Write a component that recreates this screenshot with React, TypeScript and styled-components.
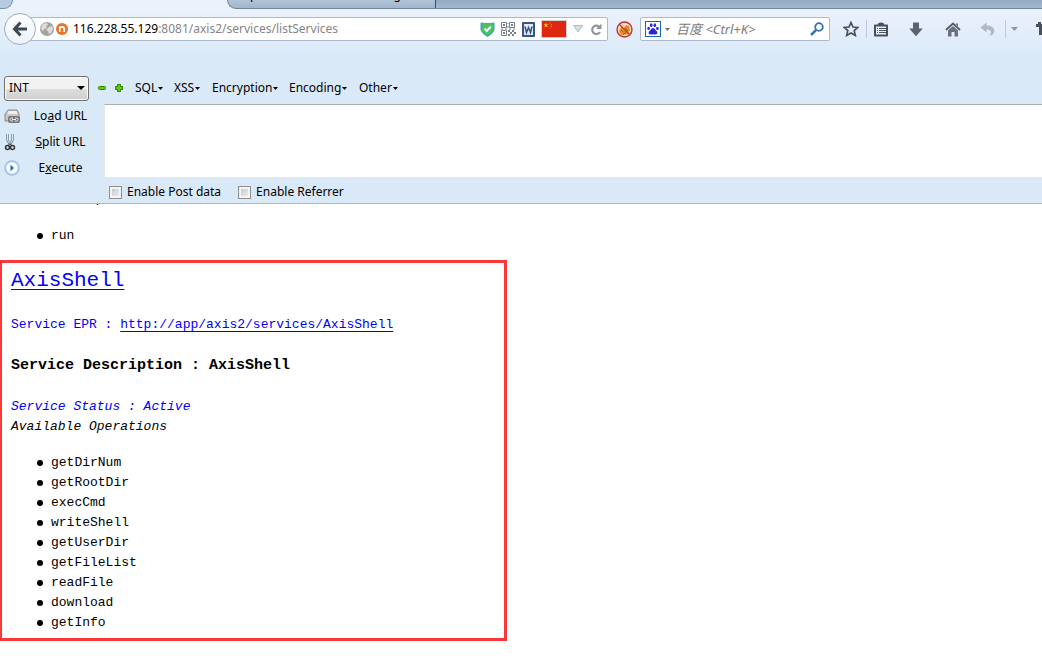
import React from "react";
import styled, { createGlobalStyle, css } from "styled-components";

const ui = `"Noto Sans", "Noto Sans CJK SC", sans-serif`;
const mono = `"Liberation Mono", "Noto Sans CJK SC", monospace`;

const Global = createGlobalStyle`
  * { box-sizing: border-box; }
  body { margin: 0; background: #fff; color: #000; }
  button, input, select, textarea { font: inherit; color: inherit; margin: 0; }
`;

const Chrome = styled.header`
  background: linear-gradient(#ebf2fb 8px, #dae9f8 60px);
  border-bottom: 1px solid #a5bbd3;
  font: 12px/20px ${ui};
`;

const TabStrip = styled.div`
  display: flex;
  height: 9px;
  overflow: hidden;
`;

const Tab = styled.div<{ $kind: "edge" | "active" | "idle" | "rest" }>`
  height: 9px;
  ${(p) => p.$kind === "edge" && css`
    width: 13px;
    background: #b6cbe2;
    border-right: 1px solid #7790b0;
    border-bottom: 1px solid #7790b0;
    border-bottom-right-radius: 9px;
  `}
  ${(p) => p.$kind === "active" && css`width: 214px;`}
  ${(p) => p.$kind === "idle" && css`
    display: flex;
    align-items: flex-end;
    justify-content: space-between;
    width: 209px;
    padding: 0 34px 3px 6px;
    overflow: hidden;
    background: linear-gradient(#b0c3d8, #a3b5c9);
    border-left: 1px solid #6f86a2;
    border-right: 1px solid #3e4e60;
    border-bottom: 1px solid #6f86a2;
    border-bottom-left-radius: 9px;
  `}
  ${(p) => p.$kind === "rest" && css`
    flex: 1;
    background: linear-gradient(#93aac5, #a3b7cd);
    border-bottom: 1px solid #6f86a2;
  `}
`;

const NavBar = styled.nav`
  display: flex;
  align-items: center;
  height: 40px;
  padding-left: 4px;
`;

const BackButton = styled.button`
  display: grid;
  place-items: center;
  flex: none;
  width: 32px;
  height: 32px;
  padding: 0;
  margin-right: -10px;
  z-index: 1;
  border: 1px solid #9fadbf;
  border-radius: 50%;
  background: linear-gradient(#fdfeff, #edf3fa);
`;

const Field = styled.div<{ $search?: boolean }>`
  display: flex;
  align-items: center;
  height: 24px;
  background: #fff;
  border: 1px solid #aab9cb;
  border-radius: 2px;
  ${(p) => p.$search
    ? css`flex: none; width: 190px; padding: 0 4px; gap: 4px;`
    : css`flex: 1; min-width: 0; padding: 0 5px 0 13px; gap: 2px;`}
`;

const Address = styled.a`
  flex: 1;
  min-width: 0;
  padding-left: 3px;
  overflow: hidden;
  white-space: nowrap;
  color: #858585;
  text-decoration: none;
`;

const Host = styled.span`color: #000;`;

const Badges = styled.div`
  display: flex;
  align-items: center;
  gap: 6px;
`;

const SearchInput = styled.input`
  flex: 1;
  min-width: 0;
  padding: 0 0 0 2px;
  border: 0;
  background: none;
  outline: 0;
  font-size: 13px;
  font-style: italic;
  &::placeholder { color: #7b7b7b; opacity: 1; }
`;

const IconButton = styled.button<{ $w?: number }>`
  display: grid;
  place-items: center;
  flex: none;
  width: ${(p) => p.$w ?? 16}px;
  height: 20px;
  padding: 0;
  border: 0;
  background: none;
`;

const Tools = styled.div`
  display: flex;
  align-items: center;
  flex: none;
  width: 212px;
  padding-left: 12px;
  overflow: hidden;
`;

const Divider = styled.span<{ $before?: number }>`
  flex: none;
  width: 1px;
  height: 18px;
  margin-left: ${(p) => p.$before ?? 0}px;
  background: #bccbdc;
`;

const HackBar = styled.section`
  padding-top: 26px;
  font: 13px/20px ${ui};
`;

const MenuRow = styled.div`
  display: flex;
  align-items: center;
  height: 26px;
  padding-left: 4px;
  font-size: 12px;
`;

const Menus = styled.div`
  display: flex;
  margin-left: 7px;
`;

const SelectWrap = styled.div`
  display: grid;
  align-items: center;
  width: 85px;
  margin-right: 5px;
  > * { grid-area: 1 / 1; }
  > svg { justify-self: end; margin-right: 4px; pointer-events: none; }
`;

const Select = styled.select`
  appearance: none;
  width: 100%;
  height: 25px;
  padding: 0 4px;
  border: 1px solid #707070;
  border-radius: 3px;
  box-shadow: inset 0 0 0 1px #fafafa;
  background: linear-gradient(#f2f2f2 50%, #dedede 50%, #d0d0d0);
`;

const MenuButton = styled.button<{ $w: number }>`
  display: flex;
  align-items: center;
  gap: 1px;
  width: ${(p) => p.$w}px;
  padding: 0;
  border: 0;
  background: none;
  white-space: nowrap;
`;

const Work = styled.div`
  display: grid;
  grid-template-columns: 104px 1fr;
  margin-top: 3px;
`;

const Actions = styled.div`
  display: flex;
  flex-direction: column;
`;

const Action = styled.button`
  display: grid;
  grid-template-columns: 16px 1fr;
  align-items: center;
  height: 26px;
  padding: 0 13px 2px 4px;
  border: 0;
  background: none;
  font-size: 12px;
  > span { padding-left: 10px; text-align: center; }
`;

const UrlBox = styled.textarea`
  display: block;
  width: 100%;
  height: 74px;
  resize: none;
  border: 1px solid #e3e9ef;
  border-top-color: #abadb3;
  border-right: 0;
  border-radius: 0;
  outline: 0;
  background: #fff;
`;

const Checks = styled.div`
  display: flex;
  gap: 17px;
  padding: 4px 0 1px 5px;
  font-size: 12px;
  line-height: 20px;
`;

const Check = styled.label`
  display: flex;
  align-items: center;
  gap: 5px;
`;

const Box = styled.input`
  appearance: none;
  width: 13px;
  height: 13px;
  border: 1px solid #8e8f8f;
  background: linear-gradient(135deg, #b9bec6, #f6f6f6);
  box-shadow: inset 0 0 0 2px #f4f4f4;
`;

const Page = styled.main`
  font: 13px/20px ${mono};
`;

const Cut = styled.div`
  display: flex;
  align-items: flex-end;
  height: 5px;
  padding-left: 11px;
  overflow: hidden;
`;

const List = styled.ul`
  margin: 0;
  padding: 0 0 0 37px;
  list-style: none;
`;

const Item = styled.li`
  display: flex;
  align-items: center;
  gap: 8px;
  &::before {
    content: "";
    width: 6px;
    height: 6px;
    border-radius: 50%;
    background: #000;
  }
`;

const Before = styled.div`
  padding: 17px 0 14px;
`;

const Highlight = styled.section`
  width: 507px;
  max-width: 100%;
  padding: 4px 8px 5px 9px;
  border: 3px solid #fb3838;
  border-left-width: 2px;
`;

const Title = styled.h2`
  margin: 0;
  font-size: 21px;
  line-height: 28px;
  font-weight: 400;
`;

const Link = styled.a`
  color: #00f;
  text-underline-offset: 3px;
  text-decoration-thickness: 1px;
`;

const Epr = styled.p`
  margin: 20px 0 0;
  color: #00f;
`;

const Description = styled.h4`
  margin: 21px 0;
  font-size: 15px;
`;

const Status = styled.div<{ $active?: boolean }>`
  font-style: italic;
  color: ${(p) => (p.$active ? "#00f" : "#000")};
`;

const Operations = styled(List)`
  margin-top: 16px;
  padding-left: 26px;
`;

const Caret = ({ w = 5, c = "#000" }: { w?: number; c?: string }) => (
  <svg width={w} height={Math.ceil(w / 2)} viewBox="0 0 10 5" preserveAspectRatio="none" aria-hidden>
    <path d="M0 0H10L5 5Z" fill={c} />
  </svg>
);

const HistoryMark = () => (
  <svg width="10" height="8" viewBox="0 0 10 8">
    <path d="M.5.5H9.500L5 7Z" fill="#d9dce0" stroke="#b4bac2" />
  </svg>
);

const BackArrow = () => (
  <svg width="16" height="16" viewBox="0 0 16 16" fill="none" stroke="#3f4954" strokeWidth="3">
    <path d="M8.500 1.500 2.500 8l6 6.500M3 8H15" />
  </svg>
);

const Globe = () => (
  <svg width="14" height="14" viewBox="0 0 14 14">
    <circle cx="7" cy="7" r="7" fill="#a3a3a3" />
    <path d="M2 3Q4 1 7 1L8 3 6 4 7 6 4 7 3 9 1 7ZM9 5 12 4 13 7 11 11 9 12 8 9 6 8Z" fill="#dedede" />
  </svg>
);

const Brand = () => (
  <svg width="12" height="12" viewBox="0 0 12 12">
    <circle cx="6" cy="6" r="6" fill="#e8742c" />
    <path d="M3.800 9V3.500M3.800 5Q4.500 3.800 6 3.800 8.200 3.800 8.200 6V9" fill="none" stroke="#fff" strokeWidth="1.700" />
  </svg>
);

const Shield = () => (
  <svg width="15" height="15" viewBox="0 0 14 15">
    <path d="M.5 1Q4 1.500 7 1.500 10 1.500 13.500 1V8Q12 12 7 14.500 2 12 .5 8Z" fill="#4cbf62" stroke="#2ba4cf" />
    <path d="M4 6.500 6.300 9 10.500 4.500" fill="none" stroke="#fff" strokeWidth="2" />
  </svg>
);

const Qr = () => (
  <svg width="15" height="15" viewBox="0 0 15 15" fill="none" stroke="#77818c">
    <path d="M.5.5h5v5h-5zM8.500.5h5v5h-5zM.5 8.500h5v5h-5z" />
    <path d="M2 3h2M10 3h2M2 11h2" strokeWidth="2" />
    <path d="M7 1v1M7 4v2M0 7h2M4 7h2M8 7h2M12 7h2" />
    <path d="M7 9h2M11 9h2M9 11h2M13 11h2M7 13h2M11 13h2" strokeWidth="2" />
  </svg>
);

const Word = () => (
  <svg width="13" height="15" viewBox="0 0 13 15">
    <rect width="13" height="15" rx="1" fill="#35548c" />
    <rect x="2" y="2" width="9" height="11" fill="#e3eaf4" />
    <path d="M3 4.500 4.500 10.500 6.500 5.500 8.500 10.500 10 4.500" fill="none" stroke="#35548c" strokeWidth="1.500" />
  </svg>
);

const Flag = () => (
  <svg width="26" height="18" viewBox="0 0 26 18">
    <rect x=".5" y=".5" width="25" height="17" fill="#de2910" stroke="#d2d0d0" />
    <path d="M5 2.500 5.600 4.400H7.500L6 5.500 6.500 7.400 5 6.200 3.500 7.400 4 5.500 2.500 4.400H4.400Z" fill="#ffde00" />
    <path d="M8.500 3h1M10 4.500h1M10 6.500h1M8.500 8h1" stroke="#f0a000" />
  </svg>
);

const Reload = () => (
  <svg width="12" height="13" viewBox="0 0 12 13">
    <path d="M9 3.500A4.200 4.200 0 1 0 10 9" fill="none" stroke="#8e959e" strokeWidth="2.200" />
    <path d="M11.500.5V6H6Z" fill="#8e959e" />
  </svg>
);

const Blocked = () => (
  <svg width="17" height="17" viewBox="0 0 17 17">
    <circle cx="8.500" cy="8.500" r="7" fill="#f1dcc8" />
    <path d="M3 10 5 6 8 7 10 4 13 5 14 9 12 13 5 14Z" fill="#e28a25" />
    <path d="M5 9 7 11M9 7 12 10M7 13 10 12" stroke="#9b5b15" />
    <circle cx="8.500" cy="8.500" r="7.500" fill="none" stroke="#c9302d" strokeWidth="1.400" />
    <path d="M3.400 3.400 13.600 13.600" stroke="#c9302d" strokeWidth="1.300" />
  </svg>
);

const Paw = () => (
  <svg width="16" height="16" viewBox="0 0 16 16" fill="#2a22dc">
    <rect x=".5" y=".5" width="15" height="15" fill="#fff" stroke="#1667b4" />
    <ellipse cx="3.600" cy="7.400" rx="1.300" ry="1.700" />
    <ellipse cx="6.200" cy="4.200" rx="1.300" ry="1.900" />
    <ellipse cx="9.800" cy="4.200" rx="1.300" ry="1.900" />
    <ellipse cx="12.400" cy="7.400" rx="1.300" ry="1.700" />
    <path d="M8 7Q9.500 7 10.500 9 13 10.500 12.300 12.500 11.500 14 8 13.300 4.500 14 3.700 12.500 3 10.500 5.500 9 6.500 7 8 7Z" />
  </svg>
);

const Magnifier = () => (
  <svg width="14" height="14" viewBox="0 0 14 14" fill="none" stroke="#3575b0">
    <circle cx="9" cy="5" r="3.800" strokeWidth="1.800" />
    <path d="M6.200 7.800 1 13" strokeWidth="2.500" />
  </svg>
);

const Star = () => (
  <svg width="16" height="16" viewBox="0 0 16 16">
    <path d="M8 1.500 10 6 14.800 6.400 11.200 9.600 12.300 14.400 8 11.900 3.700 14.400 4.800 9.600 1.200 6.400 6 6Z" fill="none" stroke="#47505b" strokeWidth="1.700" />
  </svg>
);

const Clipboard = () => (
  <svg width="14" height="15" viewBox="0 0 14 15">
    <path d="M1 3.500H13V13.500H1Z" fill="#e8eff8" stroke="#47505b" strokeWidth="2" strokeLinejoin="round" />
    <path d="M4 4V1.500Q7-.5 10 1.500V4Z" fill="#47505b" />
    <path d="M3 6.500h1M5 6.500h7M3 8.500h1M5 8.500h7M3 10.500h1M5 10.500h7" stroke="#47505b" />
  </svg>
);

const Download = () => (
  <svg width="14" height="15" viewBox="0 0 14 15">
    <path d="M4 .5H10V6.500H13.800L7 14.300.2 6.500H4Z" fill="#59626d" />
  </svg>
);

const Home = () => (
  <svg width="16" height="15" viewBox="0 0 16 15">
    <path d="M1 8 8 1.500 15 8" fill="none" stroke="#525b66" strokeWidth="1.800" />
    <path d="M3 8.500 8 4 13 8.500V14.500H9.500V10H6.500V14.500H3ZM11 1.500h2v3l-2-2Z" fill="#68717c" />
  </svg>
);

const Undo = () => (
  <svg width="15" height="14" viewBox="0 0 15 14">
    <path d="M.5 5.500 6.500.5V3.500Q14 3.500 14.300 9 14 13 9.500 13.800 12 10.500 10 8.500 9 7.500 6.500 7.500V10.500Z" fill="#b0bac5" />
  </svg>
);

const CropTool = () => (
  <svg width="14" height="14" viewBox="0 0 14 14">
    <path d="M0 2H2V0H5V2H12V11H14V13H3V5H0ZM6 5V10H9V5Z" fill="#47505b" />
  </svg>
);

const Minus = () => (
  <svg width="8" height="4" viewBox="0 0 8 4">
    <rect x=".5" y=".5" width="7" height="3" rx="1" fill="#58cf0a" stroke="#2f8500" />
  </svg>
);

const Plus = () => (
  <svg width="8" height="8" viewBox="0 0 8 8">
    <path d="M2.500.5h3v2h2v3h-2v2h-3v-2h-2v-3h2Z" fill="#58cf0a" stroke="#2f8500" />
  </svg>
);

const LoadIcon = () => (
  <svg width="16" height="15" viewBox="0 0 16 15">
    <path d="M4 1h9l2 4v7H1V5Z" fill="#c9c9c9" stroke="#898989" />
    <path d="M4.500 2h8l1 3h-10Z" fill="#eee" />
    <rect x="4" y="7" width="12" height="7" rx="2" fill="#777" />
    <path d="M9 9H7.500Q6 9 6 10.500T7.500 12H9M11 9h1.500Q14 9 14 10.500T12.500 12H11M8 10.500h4" fill="none" stroke="#eee" />
  </svg>
);

const Scissors = () => (
  <svg width="12" height="18" viewBox="0 0 12 18" fill="none">
    <path d="M3.500 1V7L6 11.500M8.500 1V7L6 11.500" stroke="#6d8995" strokeWidth="2.500" />
    <path d="M3.500 1V7L6 11M8.500 1V7L6 11" stroke="#d8e8ee" />
    <circle cx="3.500" cy="14.500" r="2" stroke="#333" strokeWidth="1.500" />
    <circle cx="8.500" cy="14.500" r="2" stroke="#333" strokeWidth="1.500" />
    <path d="M4 13 6 10.500 8 13" stroke="#333" />
  </svg>
);

const Play = () => (
  <svg width="16" height="16" viewBox="0 0 16 16">
    <circle cx="8" cy="8" r="7" fill="#dbe8f9" stroke="#a3bfe8" strokeWidth="1.500" />
    <circle cx="8" cy="8" r="5" fill="#fff" />
    <path d="M6.500 4.500 10 8 6.500 11.500Z" fill="#2d6bc0" />
  </svg>
);

const menus: [string, number][] = [
  ["SQL", 39],
  ["XSS", 38],
  ["Encryption", 77],
  ["Encoding", 70],
  ["Other", 50],
];

const operations = [
  "getDirNum", "getRootDir", "execCmd", "writeShell", "getUserDir",
  "getFileList", "readFile", "download", "getInfo",
];

export default function App() {
  return (
    <>
      <Global />
      <Chrome>
        <TabStrip>
          <Tab $kind="edge" />
          <Tab $kind="active" />
          <Tab $kind="idle"><span>http://</span><span>g</span></Tab>
          <Tab $kind="rest" />
        </TabStrip>
        <NavBar aria-label="Navigation">
          <BackButton aria-label="Back"><BackArrow /></BackButton>
          <Field>
            <Globe />
            <Brand />
            <Address href="#"><Host>116.228.55.129</Host>:8081/axis2/services/listServices</Address>
            <Badges>
              <Shield />
              <Qr />
              <Word />
              <Flag />
              <IconButton $w={10} aria-label="History"><HistoryMark /></IconButton>
              <IconButton $w={13} aria-label="Reload"><Reload /></IconButton>
            </Badges>
          </Field>
          <IconButton $w={32} aria-label="Blocker"><Blocked /></IconButton>
          <Field $search>
            <Paw />
            <Caret w={5} c="#707070" />
            <SearchInput aria-label="Search" placeholder="百度 <Ctrl+K>" />
            <IconButton aria-label="Go"><Magnifier /></IconButton>
          </Field>
          <Tools>
            <IconButton $w={18} aria-label="Bookmark"><Star /></IconButton>
            <Divider $before={6} />
            <IconButton $w={28} aria-label="Bookmarks list"><Clipboard /></IconButton>
            <IconButton $w={42} aria-label="Downloads"><Download /></IconButton>
            <IconButton $w={32} aria-label="Home"><Home /></IconButton>
            <IconButton $w={36} aria-label="Undo"><Undo /></IconButton>
            <Divider />
            <IconButton $w={17} aria-label="Undo list"><Caret w={7} c="#8e98a4" /></IconButton>
            <IconButton $w={40} aria-label="Crop"><CropTool /></IconButton>
          </Tools>
        </NavBar>
        <HackBar>
          <MenuRow>
            <SelectWrap>
              <Select aria-label="Type" defaultValue="INT"><option>INT</option></Select>
              <Caret w={8} />
            </SelectWrap>
            <IconButton aria-label="Less"><Minus /></IconButton>
            <IconButton $w={18} aria-label="More"><Plus /></IconButton>
            <Menus>
              {menus.map(([name, w]) => (
                <MenuButton key={name} $w={w}>{name}<Caret w={5} /></MenuButton>
              ))}
            </Menus>
          </MenuRow>
          <Work>
            <Actions>
              <Action><LoadIcon /><span>Lo<u>a</u>d URL</span></Action>
              <Action><Scissors /><span><u>S</u>plit URL</span></Action>
              <Action><Play /><span>E<u>x</u>ecute</span></Action>
            </Actions>
            <div>
              <UrlBox aria-label="URL" />
              <Checks>
                <Check><Box type="checkbox" />Enable Post data</Check>
                <Check><Box type="checkbox" />Enable Referrer</Check>
              </Checks>
            </div>
          </Work>
        </HackBar>
      </Chrome>
      <Page>
        <Cut><Status>Available Operations</Status></Cut>
        <Before>
          <List><Item>run</Item></List>
        </Before>
        <Highlight>
          <Title><Link href="#">AxisShell</Link></Title>
          <Epr>Service EPR : <Link href="#">http://app/axis2/services/AxisShell</Link></Epr>
          <Description>Service Description : AxisShell</Description>
          <Status $active>Service Status : Active</Status>
          <Status>Available Operations</Status>
          <Operations>
            {operations.map((name) => <Item key={name}>{name}</Item>)}
          </Operations>
        </Highlight>
      </Page>
    </>
  );
}
